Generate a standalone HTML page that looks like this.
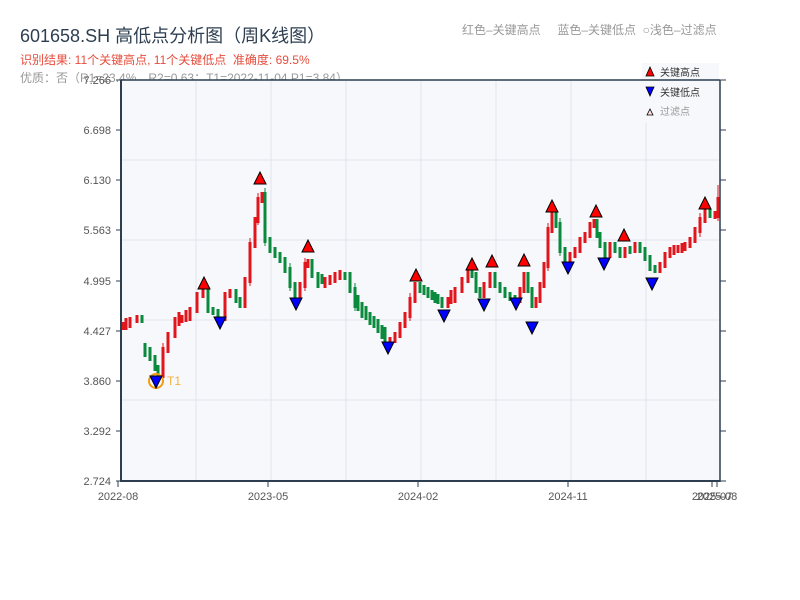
<!DOCTYPE html>
<html><head><meta charset="utf-8"><style>
html,body{margin:0;padding:0;background:#fff;width:800px;height:600px;overflow:hidden}
body{font-family:"Liberation Sans","Noto Sans CJK SC",sans-serif;position:relative}
.t{position:absolute;white-space:nowrap}
</style></head><body>
<div class="t" style="left:20px;top:22px;font-size:18px;color:#2c3e50">601658.SH 高低点分析图（周K线图）</div>
<div class="t" style="left:20px;top:51px;font-size:12px;color:#e74c3c">识别结果: 11个关键高点, 11个关键低点&nbsp;&nbsp;准确度: 69.5%</div>
<div class="t" style="left:20px;top:69px;font-size:12px;color:#999">优质：否（R1=23.4%，R2=0.63；T1=2022-11-04 P1=3.84）</div>
<div class="t" style="left:462px;top:21px;font-size:12px;color:#999">红色–关键高点&nbsp;&nbsp;&nbsp;&nbsp;&nbsp;蓝色–关键低点&nbsp;&nbsp;○浅色–过滤点</div>
<svg width="800" height="600" style="position:absolute;left:0;top:0" xmlns="http://www.w3.org/2000/svg" font-family="Liberation Sans, Noto Sans CJK SC, sans-serif">
<rect x="121" y="80" width="599" height="401" fill="#f6f8fb"/>
<g stroke="#e1e5ec" stroke-width="1">
<line x1="196" y1="80" x2="196" y2="481"/><line x1="271" y1="80" x2="271" y2="481"/><line x1="346" y1="80" x2="346" y2="481"/><line x1="421" y1="80" x2="421" y2="481"/><line x1="496" y1="80" x2="496" y2="481"/><line x1="571" y1="80" x2="571" y2="481"/><line x1="646" y1="80" x2="646" y2="481"/>
<line x1="121" y1="160" x2="720" y2="160"/><line x1="121" y1="240" x2="720" y2="240"/><line x1="121" y1="320" x2="720" y2="320"/><line x1="121" y1="400" x2="720" y2="400"/>
</g>
<g font-size="11" fill="#555" text-anchor="end">
<text x="111" y="84">7.266</text><text x="111" y="134">6.698</text><text x="111" y="184">6.130</text><text x="111" y="234">5.563</text><text x="111" y="285">4.995</text><text x="111" y="335">4.427</text><text x="111" y="385">3.860</text><text x="111" y="435">3.292</text><text x="111" y="485">2.724</text>
</g>
<g stroke="#2c3e50">
<path d="M116 80h5M116 130h5M116 180h5M116 230h5M116 281h5M116 331h5M116 381h5M116 431h5M116 481h5M720 80h6M720 130h6M720 180h6M720 230h6M720 281h6M720 331h6M720 381h6M720 431h6M720 481h6"/>
</g>
<path stroke="#e0161c" stroke-width="3" fill="none" d="M123 322v8M126 318v12M130 317v11M137 315v8M163 347v31M168 332v21M175 317v21M179 312v14M182 315v8M186 310v12M190 307v14M197 292v21M203 287v11M225 292v29M230 289v9M245 277v31M250 242v41M255 217v31M258 197v26M262 192v11M300 282v16M305 262v26M308 259v9M325 277v11M330 275v10M335 272v11M340 270v10M390 337v8M395 332v11M400 322v16M405 312v16M410 297v21M415 282v21M448 297v11M451 290v14M455 287v16M462 277v16M468 269v14M484 282v16M490 272v16M520 287v16M524 272v21M536 297v11M540 282v21M544 262v26M548 227v41M552 212v21M570 252v11M575 247v11M580 237v16M585 232v11M590 222v16M594 219v9M610 242v16M625 247v11M635 242v11M660 262v11M665 252v16M670 247v11M674 245v10M678 245v8M682 243v10M685 242v9M690 237v11M695 227v16M700 217v16M705 209v14M715 211v8M718 197v21"/>
<path stroke="#e0161c" stroke-width="1" fill="none" d="M163 343v38M250 238v48M258 193v32M305 258v33M410 293v28M548 223v48M700 213v24M718 185v36"/>
<path stroke="#0a8a3c" stroke-width="3" fill="none" d="M142 315v8M145 343v14M150 347v14M155 355v16M158 365v13M208 287v26M213 307v8M218 309v12M236 289v14M240 297v11M265 192v51M270 237v16M275 247v11M280 252v11M285 257v16M290 267v21M295 282v16M312 259v19M318 272v16M322 274v10M345 272v8M350 272v21M355 287v21M358 295v16M362 302v16M366 306v14M370 312v13M374 316v12M378 319v14M382 325v14M385 327v16M420 282v11M424 285v10M428 287v11M432 290v10M435 292v11M438 294v10M442 297v11M472 269v9M476 272v21M480 287v11M495 272v16M500 282v11M505 287v11M510 292v9M515 295v8M528 272v21M532 287v21M556 212v16M560 222v31M565 247v16M597 219v19M600 232v16M605 242v16M615 242v11M620 247v11M630 246v8M640 242v11M645 247v14M650 255v16M655 265v8M710 209v9"/>
<path stroke="#0a8a3c" stroke-width="1" fill="none" d="M265 188v58M560 218v38M290 263v28M355 283v28"/>
<g fill="#f00" stroke="#000" stroke-width="1">
<polygon points="198,289 210,289 204,277"/><polygon points="254,184 266,184 260,172"/><polygon points="302,252 314,252 308,240"/><polygon points="410,281 422,281 416,269"/><polygon points="466,270 478,270 472,258"/><polygon points="486,267 498,267 492,255"/><polygon points="518,266 530,266 524,254"/><polygon points="546,212 558,212 552,200"/><polygon points="590,217 602,217 596,205"/><polygon points="618,241 630,241 624,229"/><polygon points="699,209 711,209 705,197"/>
</g>
<circle cx="156" cy="381" r="7" fill="none" stroke="#f39c12" stroke-width="2"/>
<text x="167" y="385" font-size="12" fill="#f5b041">T1</text>
<g fill="#00f" stroke="#000" stroke-width="1">
<polygon points="150,376 162,376 156,388"/><polygon points="214,317 226,317 220,329"/><polygon points="290,298 302,298 296,310"/><polygon points="382,342 394,342 388,354"/><polygon points="438,310 450,310 444,322"/><polygon points="478,299 490,299 484,311"/><polygon points="510,298 522,298 516,310"/><polygon points="526,322 538,322 532,334"/><polygon points="562,262 574,262 568,274"/><polygon points="598,258 610,258 604,270"/><polygon points="646,278 658,278 652,290"/>
</g>
<rect x="642" y="63" width="77" height="60" fill="#f6f8fb"/>
<g stroke="#2c3e50">
<line x1="121" y1="80" x2="720" y2="80" stroke-width="1.5"/><line x1="121" y1="80" x2="121" y2="482" stroke-width="2"/><line x1="720" y1="80" x2="720" y2="482" stroke-width="1.5"/><line x1="121" y1="481" x2="720" y2="481" stroke-width="2"/>
<path d="M118 481v6M268 481v6M418 481v6M568 481v6M717 481v6M712 481v6"/>
</g>
<g font-size="11" fill="#555" text-anchor="middle">
<text x="118" y="500">2022-08</text><text x="268" y="500">2023-05</text><text x="418" y="500">2024-02</text><text x="568" y="500">2024-11</text><text x="712" y="500">2025-07</text><text x="717" y="500">2025-08</text>
</g>
<polygon points="646,76 654,76 650,67" fill="#f00" stroke="#000" stroke-width="0.8"/>
<text x="660" y="76" font-size="10" fill="#333">关键高点</text>
<polygon points="646,87 654,87 650,96" fill="#00f" stroke="#000" stroke-width="0.8"/>
<text x="660" y="96" font-size="10" fill="#333">关键低点</text>
<polygon points="647,115 653,115 650,109" fill="#fdd" stroke="#000" stroke-width="0.8"/>
<text x="660" y="115" font-size="10" fill="#999">过滤点</text>
</svg>
</body></html>
